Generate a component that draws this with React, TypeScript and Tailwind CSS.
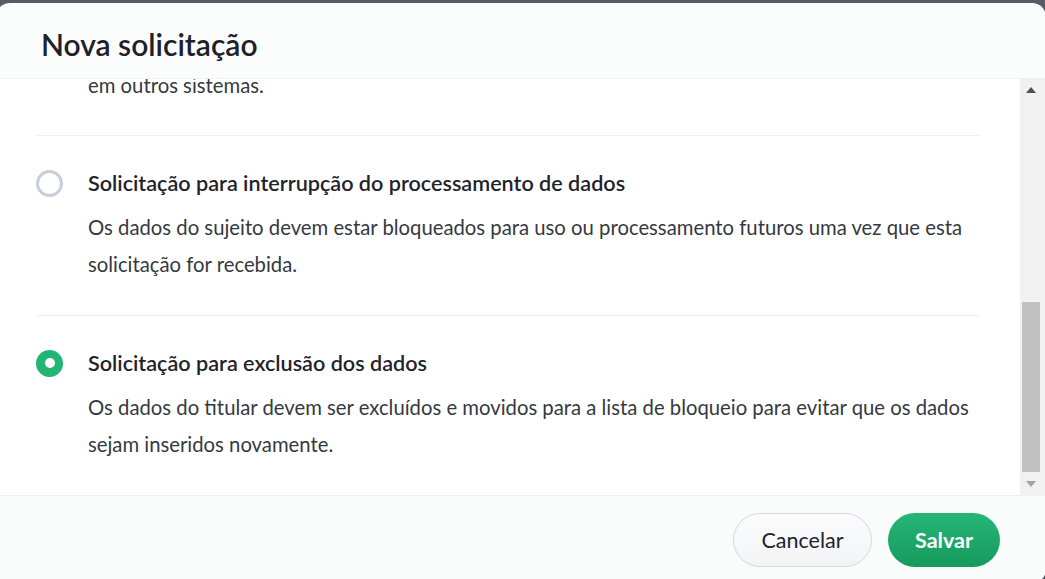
import React from "react";

function Radio({ checked }: { checked: boolean }) {
  if (checked) {
    return (
      <div className="w-[27px] h-[27px] rounded-full bg-[#22b573] flex items-center justify-center shrink-0">
        <div className="w-[10px] h-[10px] rounded-full bg-white" />
      </div>
    );
  }
  return <div className="w-[27px] h-[27px] rounded-full border-[3px] border-[#c6ceda] bg-white shrink-0" />;
}

function Option({ title, desc, checked }: { title: string; desc: string; checked: boolean }) {
  return (
    <div className="border-t border-[#f0f1f3] pt-[33px] pb-[32px]">
      <div className="flex items-center gap-[25px] h-[28px]">
        <Radio checked={checked} />
        <div className="text-[21.6px] font-semibold text-[#1f232c] leading-[28px]">{title}</div>
      </div>
      <p className="ml-[52px] mt-[12px] text-[20.3px] leading-[37px] text-[#353941]">{desc}</p>
    </div>
  );
}

export default function App() {
  return (
    <div
      className="w-[1045px] h-[579px] overflow-hidden bg-[#575b66] pt-[3px]"
      style={{ fontFamily: "Lato, 'Noto Sans', sans-serif" }}
    >
      <div className="ml-[-4px] w-[1050px] h-[580px] rounded-[14px] bg-[#fbfcfc] flex flex-col overflow-hidden">
        <div className="h-[76px] shrink-0 flex items-center pl-[45px] border-b border-[#eff1f2]">
          <h1 className="text-[30px] font-semibold text-[#1e2129] leading-none mt-[6px]">Nova solicitação</h1>
        </div>
        <div className="h-[416px] shrink-0 flex bg-white">
          <div className="flex-1 overflow-hidden pl-[40px] pr-[40px]">
            <div className="mt-[-12.5px] pb-[31.5px]">
              <p className="ml-[52px] text-[20.3px] leading-[37px] text-[#353941]">em outros sistemas.</p>
            </div>
            <Option
              checked={false}
              title="Solicitação para interrupção do processamento de dados"
              desc="Os dados do sujeito devem estar bloqueados para uso ou processamento futuros uma vez que esta solicitação for recebida."
            />
            <Option
              checked={true}
              title="Solicitação para exclusão dos dados"
              desc="Os dados do titular devem ser excluídos e movidos para a lista de bloqueio para evitar que os dados sejam inseridos novamente."
            />
          </div>
          <div className="w-[26px] shrink-0 bg-[#f1f1f1] flex flex-col items-center pr-[4px]">
            <div className="h-[22px] flex items-center justify-center">
              <svg width="10" height="6" viewBox="0 0 10 6"><path d="M0 6 L5 0 L10 6 Z" fill="#505050" /></svg>
            </div>
            <div className="flex-1 w-full px-[2px] flex flex-col">
              <div className="h-[201px]" />
              <div className="h-[170px] bg-[#c1c1c1]" />
            </div>
            <div className="h-[22px] flex items-center justify-center">
              <svg width="10" height="6" viewBox="0 0 10 6"><path d="M0 0 L10 0 L5 6 Z" fill="#a3a3a3" /></svg>
            </div>
          </div>
        </div>
        <div className="flex-1 border-t border-[#eef0f2] bg-[#fafbfb] flex justify-end items-start pt-[17px] pr-[46px] gap-[16px]">
          <button className="h-[54px] w-[139px] rounded-full border border-[#d5d9df] bg-gradient-to-b from-[#fcfcfd] to-[#f3f4f6] text-[21.5px] text-[#1f232c]">
            Cancelar
          </button>
          <button className="h-[54px] w-[112px] rounded-full bg-gradient-to-b from-[#25b677] to-[#169a5d] text-[21.5px] font-bold text-white">
            Salvar
          </button>
        </div>
      </div>
    </div>
  );
}
